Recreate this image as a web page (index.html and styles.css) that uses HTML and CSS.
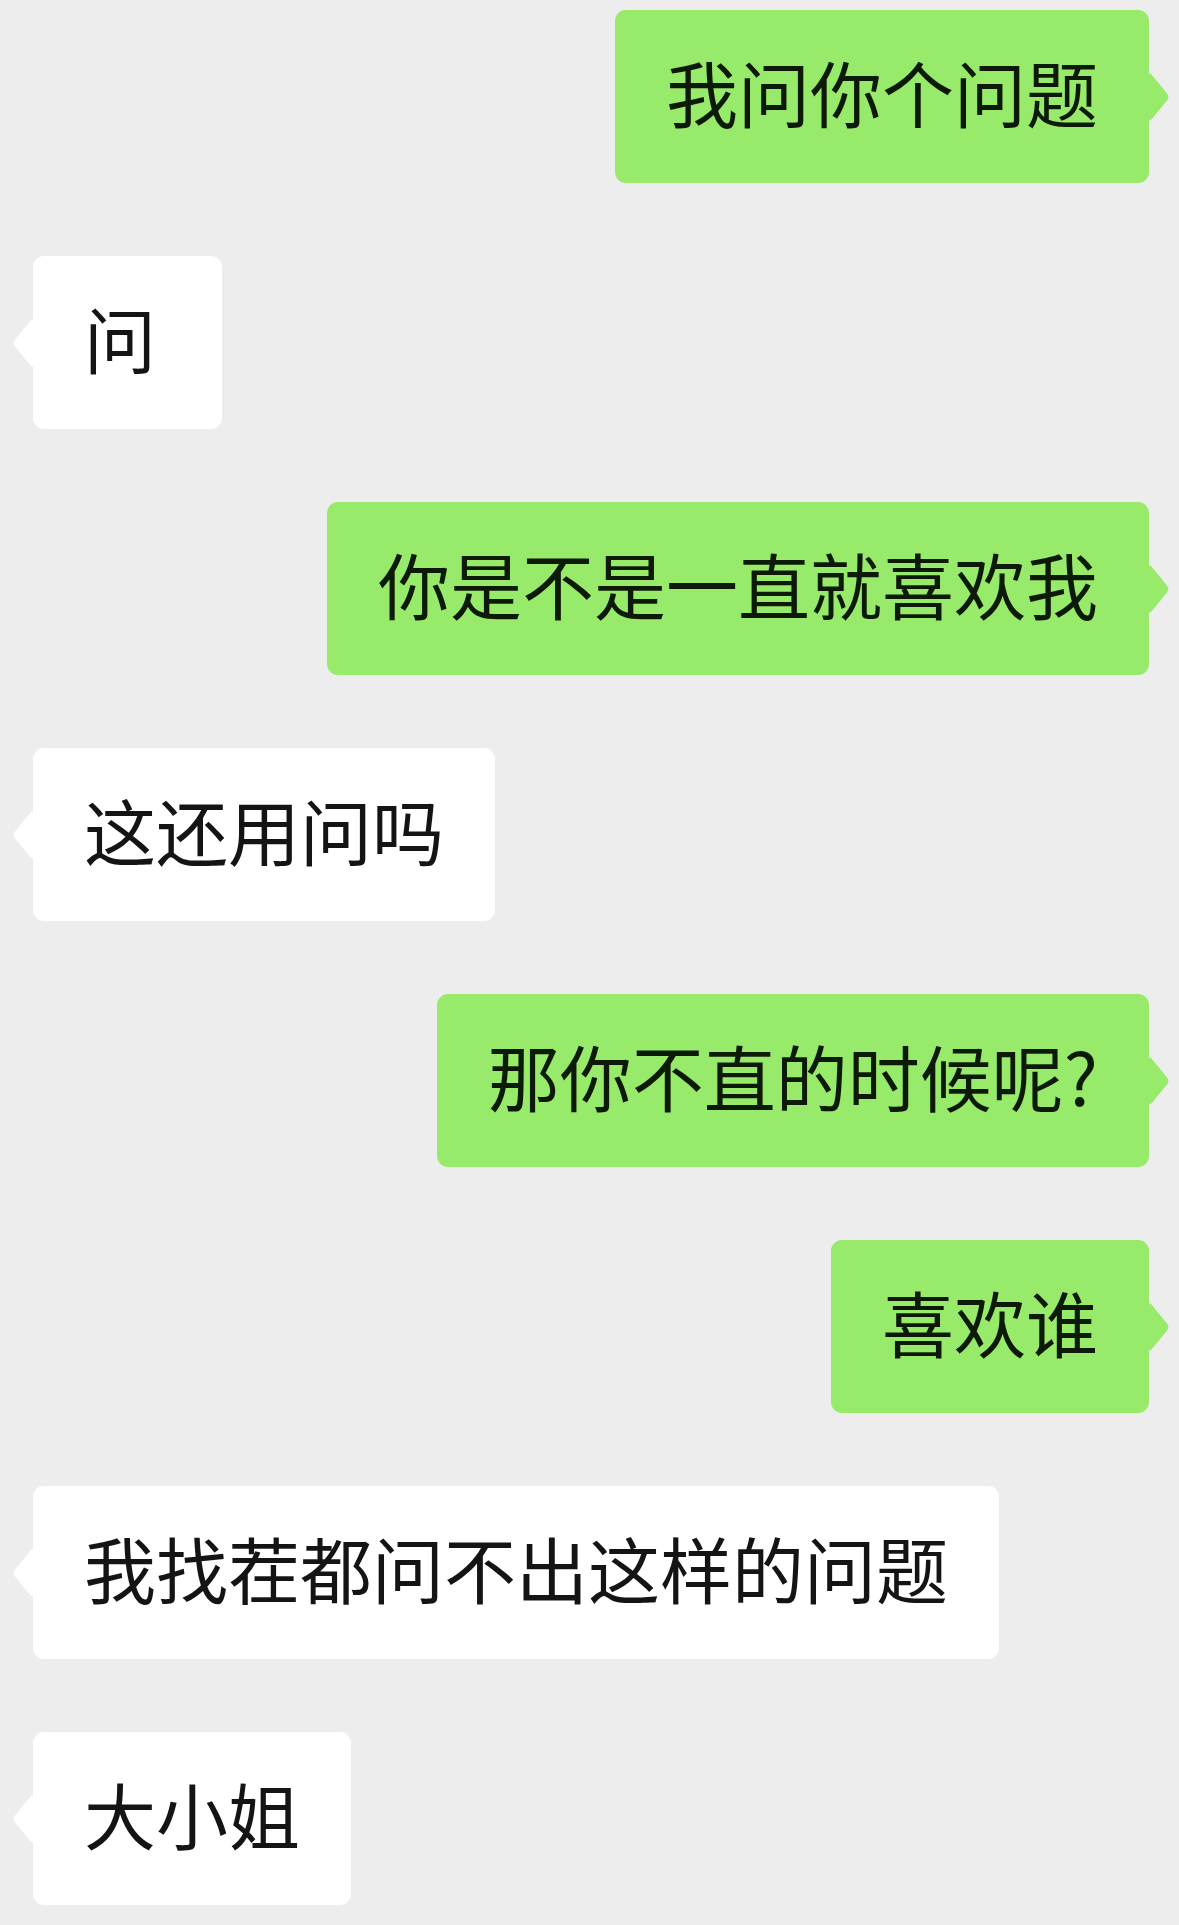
FILE: index.html
```html
<!DOCTYPE html>
<html lang="zh-CN">
<head>
<meta charset="utf-8">
<title>chat</title>
<link rel="stylesheet" href="styles.css">
</head>
<body>
<div class="chat">
  <div class="row sent"><div class="bubble">我问你个问题</div></div>
  <div class="row recv"><div class="bubble">问</div></div>
  <div class="row sent"><div class="bubble">你是不是一直就喜欢我</div></div>
  <div class="row recv"><div class="bubble">这还用问吗</div></div>
  <div class="row sent"><div class="bubble">那你不直的时候呢?</div></div>
  <div class="row sent"><div class="bubble">喜欢谁</div></div>
  <div class="row recv"><div class="bubble">我找茬都问不出这样的问题</div></div>
  <div class="row recv"><div class="bubble">大小姐</div></div>
</div>
</body>
</html>
```
FILE: styles.css
```css
html, body {
  margin: 0;
  padding: 0;
  background: #ededed;
}
body {
  font-family: "Noto Sans CJK SC", "Noto Sans", sans-serif;
}
.chat {
  display: flex;
  flex-direction: column;
  gap: 73px;
  padding: 10px 30px 0 33px;
}
.row {
  display: flex;
}
.row.sent {
  justify-content: flex-end;
}
.row.recv {
  justify-content: flex-start;
}
.bubble {
  position: relative;
  box-sizing: border-box;
  min-width: 189px;
  padding: 30px 51px 42px;
  font-size: 72px;
  line-height: 101px;
  border-radius: 11px;
  white-space: nowrap;
  color: #141414;
}
.sent .bubble {
  background: #98ea6b;
  color: #0d1a08;
}
.recv .bubble {
  background: #ffffff;
}
.bubble::after {
  content: "";
  position: absolute;
  top: 50%;
  width: 36px;
  height: 36px;
  margin-top: -18px;
  border-radius: 5px;
  background: inherit;
  transform: scaleX(0.82) rotate(45deg);
}
.sent .bubble::after {
  right: -18px;
}
.recv .bubble::after {
  left: -18px;
}
```
